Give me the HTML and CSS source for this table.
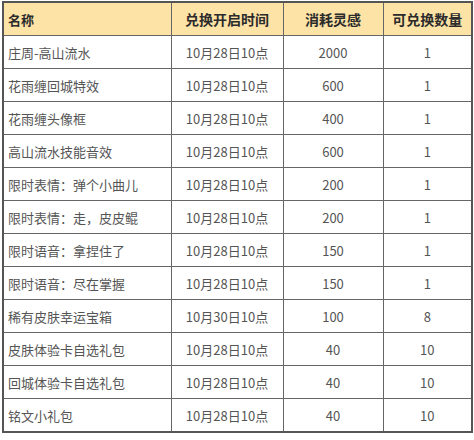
FILE: index.html
```html
<!DOCTYPE html>
<html lang="zh">
<head>
<meta charset="utf-8">
<link rel="stylesheet" href="styles.css">
</head>
<body>
<table class="tbl">
  <colgroup>
    <col class="c1"><col class="c2"><col class="c3"><col class="c4">
  </colgroup>
  <thead>
    <tr class="head">
      <th class="name">名称</th><th>兑换开启时间</th><th>消耗灵感</th><th>可兑换数量</th>
    </tr>
  </thead>
  <tbody>
    <tr><td class="name">庄周-高山流水</td><td>10月28日10点</td><td>2000</td><td>1</td></tr>
    <tr><td class="name">花雨缠回城特效</td><td>10月28日10点</td><td>600</td><td>1</td></tr>
    <tr><td class="name">花雨缠头像框</td><td>10月28日10点</td><td>400</td><td>1</td></tr>
    <tr><td class="name">高山流水技能音效</td><td>10月28日10点</td><td>600</td><td>1</td></tr>
    <tr><td class="name">限时表情：弹个小曲儿</td><td>10月28日10点</td><td>200</td><td>1</td></tr>
    <tr><td class="name">限时表情：走，皮皮鲲</td><td>10月28日10点</td><td>200</td><td>1</td></tr>
    <tr><td class="name">限时语音：拿捏住了</td><td>10月28日10点</td><td>150</td><td>1</td></tr>
    <tr><td class="name">限时语音：尽在掌握</td><td>10月28日10点</td><td>150</td><td>1</td></tr>
    <tr><td class="name">稀有皮肤幸运宝箱</td><td>10月30日10点</td><td>100</td><td>8</td></tr>
    <tr><td class="name">皮肤体验卡自选礼包</td><td>10月28日10点</td><td>40</td><td>10</td></tr>
    <tr><td class="name">回城体验卡自选礼包</td><td>10月28日10点</td><td>40</td><td>10</td></tr>
    <tr><td class="name">铭文小礼包</td><td>10月28日10点</td><td>40</td><td>10</td></tr>
  </tbody>
</table>
</body>
</html>
```
FILE: styles.css
```css
html, body {
  margin: 0;
  padding: 0;
  background: #ffffff;
}
body {
  padding: 1px 0 0 2px;
  font-family: "Noto Sans CJK SC", "Noto Sans", sans-serif;
}
.tbl {
  border-collapse: collapse;
  table-layout: fixed;
  width: 469px;
  border: 2px solid #555;
}
.c1 { width: 168px; }
.c2 { width: 112px; }
.c3 { width: 100px; }
.c4 { width: 89px; }
.tbl th, .tbl td {
  border: 1px solid #666;
  height: 32px;
  padding: 0;
  text-align: center;
  vertical-align: middle;
  line-height: 1;
}
.tbl th {
  background: #fde3a6;
  color: #2b2b2b;
  font-weight: bold;
  font-size: 14px;
}
.tbl td {
  color: #555;
  font-size: 13px;
}
.tbl .name {
  text-align: left;
  padding-left: 4px;
}
.tbl th.name {
  font-size: 13px;
}
```
